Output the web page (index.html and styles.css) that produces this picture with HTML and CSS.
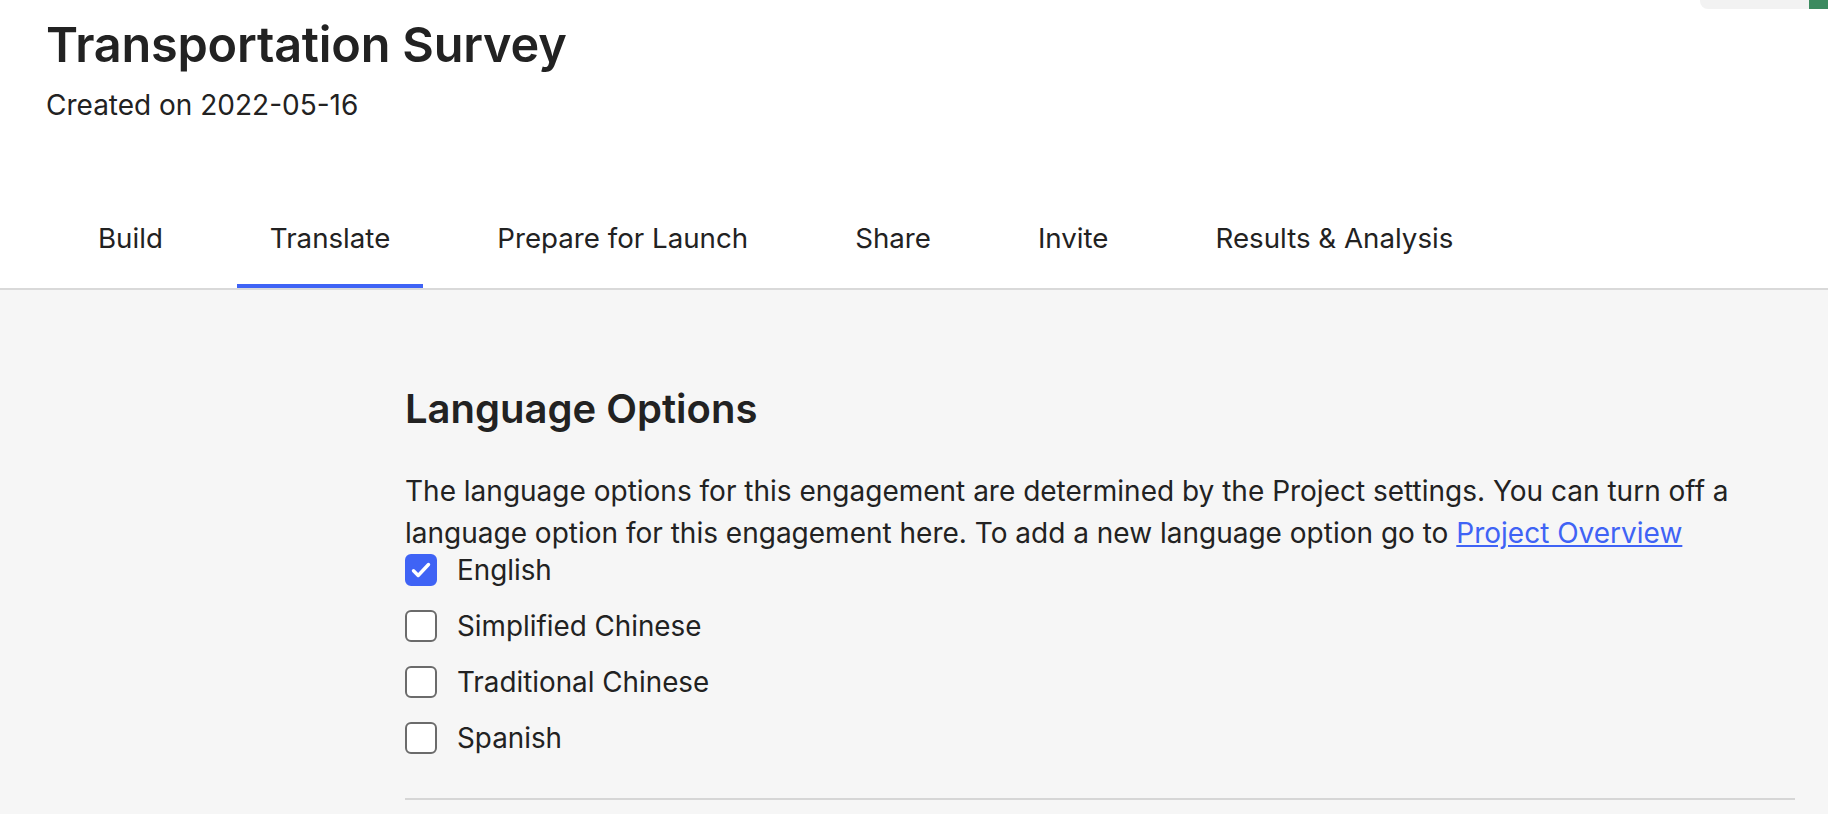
FILE: index.html
```html
<!DOCTYPE html>
<html lang="en">
<head>
<meta charset="utf-8">
<title>Transportation Survey</title>
<link rel="stylesheet" href="styles.css">
</head>
<body>
<div class="corner"><div class="corner-pill"></div><div class="corner-green"></div></div>
<header class="header">
  <h1 class="title">Transportation Survey</h1>
  <p class="subtitle">Created on 2022-05-16</p>
  <nav class="tabs">
    <a class="tab">Build</a>
    <a class="tab active">Translate</a>
    <a class="tab">Prepare for Launch</a>
    <a class="tab">Share</a>
    <a class="tab">Invite</a>
    <a class="tab">Results &amp; Analysis</a>
  </nav>
</header>
<main class="main">
  <section class="content">
    <h2 class="heading">Language Options</h2>
    <p class="desc">The language options for this engagement are determined by the Project settings. You can turn off a language option for this engagement here. To add a new language option go to <a class="link" href="#">Project Overview</a></p>
    <div class="options">
      <label class="option"><span class="box checked"><svg viewBox="0 0 32 32" width="32" height="32"><path d="M8.5 16.8 L13.2 21.5 L23.5 10.5" fill="none" stroke="#fff" stroke-width="3.4" stroke-linecap="round" stroke-linejoin="round"/></svg></span><span class="label">English</span></label>
      <label class="option"><span class="box"></span><span class="label">Simplified Chinese</span></label>
      <label class="option"><span class="box"></span><span class="label">Traditional Chinese</span></label>
      <label class="option"><span class="box"></span><span class="label">Spanish</span></label>
    </div>
    <hr class="divider">
  </section>
</main>
</body>
</html>
```
FILE: styles.css
```css
* { box-sizing: border-box; }
html, body { margin: 0; padding: 0; }
body {
  font-family: Inter, "Noto Sans", sans-serif;
  color: #222222;
  background: #f6f6f6;
  width: 1828px;
  height: 814px;
  overflow: hidden;
  position: relative;
}
.corner {
  position: absolute;
  top: 0;
  right: 0;
  display: flex;
  height: 9px;
}
.corner-pill {
  width: 109px;
  height: 9px;
  background: #f2f2f2;
  border-bottom-left-radius: 8px;
}
.corner-green {
  width: 19px;
  height: 9px;
  background: #3b8a5f;
}
.header {
  background: #ffffff;
  padding-top: 15px;
  border-bottom: 2px solid #d9d9d9;
}
.title {
  margin: 0 0 0 46px;
  font-size: 48.6px;
  line-height: 60px;
  font-weight: 600;
  letter-spacing: -0.2px;
}
.subtitle {
  margin: 10px 0 0 46px;
  font-size: 28px;
  line-height: 40px;
}
.tabs {
  display: flex;
  gap: 41px;
  padding-left: 65px;
  margin-top: 55px;
}
.tab {
  padding: 38px 33px 26px;
  font-size: 27.7px;
  line-height: 40px;
  border-bottom: 4px solid transparent;
  color: #222222;
}
.tab.active { border-bottom-color: #3f63f5; }
.main {
  padding: 95px 33px 0 405px;
}
.heading {
  margin: 0;
  font-size: 40px;
  line-height: 48px;
  font-weight: 600;
}
.desc {
  margin: 37px 0 0;
  font-size: 28px;
  line-height: 42px;
}
.link { color: #3f63f5; text-decoration: underline; }
.options {
  display: flex;
  flex-direction: column;
  gap: 24px;
  margin-top: 0;
}
.option {
  display: flex;
  align-items: center;
  gap: 20px;
  height: 32px;
}
.box {
  width: 32px;
  height: 32px;
  border: 2px solid #6b6b6b;
  border-radius: 6px;
  background: #ffffff;
  display: flex;
}
.box.checked {
  background: #3f63f5;
  border-color: #3f63f5;
}
.box svg { margin: -2px; }
.label {
  font-size: 27.8px;
  line-height: 32px;
}
.divider {
  margin: 44px 0 0;
  border: 0;
  border-top: 2px solid #d6d6d6;
}
```
